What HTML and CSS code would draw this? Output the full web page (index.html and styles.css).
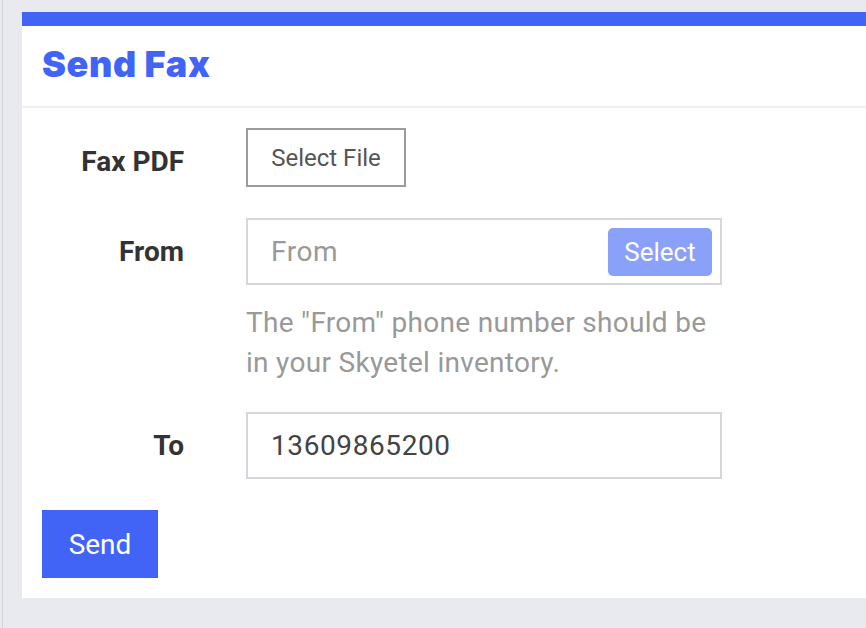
FILE: index.html
```html
<!DOCTYPE html>
<html lang="en">
<head>
    <meta charset="UTF-8">
    <meta name="viewport" content="width=device-width, initial-scale=1.0">
    <title>Send Fax</title>
    <link rel="stylesheet" href="styles.css">
</head>
<body>
<div class="frame">
    <div class="panel">
        <div class="panel-heading">
            <h1 class="panel-title">Send Fax</h1>
        </div>
        <form class="panel-body">
            <div class="form-row row-file">
                <label class="form-label">Fax PDF</label>
                <div class="form-field">
                    <button type="button" class="btn-file">Select File</button>
                </div>
            </div>

            <div class="form-row">
                <label class="form-label" for="from">From</label>
                <div class="form-field">
                    <div class="input-group">
                        <input id="from" class="input-plain" type="text" placeholder="From">
                        <button type="button" class="btn-select">Select</button>
                    </div>
                </div>
            </div>
            <div class="form-row">
                <span></span>
                <p class="help-text">The "From" phone number should be in your Skyetel inventory.</p>
            </div>

            <div class="form-row row-to">
                <label class="form-label" for="to">To</label>
                <div class="form-field">
                    <input id="to" class="input-box" type="text" value="13609865200">
                </div>
            </div>

            <button type="button" class="btn-send">Send</button>
        </form>
    </div>
</div>
</body>
</html>
```

FILE: styles.css
```css
body, html {
    margin: 0;
    padding: 0;
    background-color: #e9eaef;
    font-family: Roboto, "Liberation Sans", sans-serif;
    font-size: 28px;
    line-height: 40px;
    color: #333;
}

.frame {
    margin-left: 2px;
    border-left: 1px solid #d2d4d9;
    padding: 12px 0 30px 19px;
    min-height: 586px;
}

.panel {
    background: #fff;
    border-top: 14px solid #4264f6;
}

.panel-heading {
    height: 82px;
    box-sizing: border-box;
    display: flex;
    align-items: center;
    padding: 0 0 5px 20px;
    border-bottom: 2px solid #f0f0f2;
}

.panel-title {
    margin: 0;
    font-family: Inter, "DejaVu Sans", sans-serif;
    font-weight: 900;
    font-size: 36px;
    letter-spacing: 0.6px;
    color: #4264f6;
}

.panel-body {
    margin: 0;
    padding: 20px 20px 20px 20px;
}

.form-row {
    display: grid;
    grid-template-columns: 142px 476px;
    column-gap: 62px;
    align-items: center;
}

.row-file {
    margin-bottom: 31px;
}

.row-file .form-label {
    padding-top: 9px;
}

.row-to {
    margin-bottom: 31px;
}

.form-label {
    text-align: right;
    font-weight: 700;
    color: #333;
}

.btn-file {
    width: 160px;
    height: 59px;
    background: #fff;
    border: 2px solid #9b9b9b;
    font-family: inherit;
    font-size: 24px;
    color: #555;
    padding: 0;
}

.input-group {
    display: flex;
    align-items: center;
    height: 67px;
    box-sizing: border-box;
    border: 2px solid #d4d7dc;
    padding-right: 8px;
}

.input-plain,
.input-box {
    font-family: inherit;
    font-size: 28px;
    letter-spacing: 0.6px;
    color: #444;
    outline: none;
}

.input-plain {
    flex: 1;
    min-width: 0;
    border: 0;
    padding: 0 0 0 23px;
    height: 100%;
    background: transparent;
}

.input-plain::placeholder {
    color: #999;
}

.input-box {
    display: block;
    width: 100%;
    height: 67px;
    box-sizing: border-box;
    border: 2px solid #d4d7dc;
    padding: 0 0 0 23px;
}

.btn-select {
    width: 104px;
    height: 48px;
    border: 0;
    border-radius: 5px;
    background: #8aa1f9;
    color: #fff;
    font-family: inherit;
    font-size: 26px;
    padding: 0;
}

.help-text {
    margin: 18px 0 29px;
    color: #999;
    letter-spacing: 0.3px;
}

.btn-send {
    width: 116px;
    height: 68px;
    border: 0;
    background: #4264f6;
    color: #fff;
    font-family: inherit;
    font-size: 28px;
    padding: 0;
}
```
